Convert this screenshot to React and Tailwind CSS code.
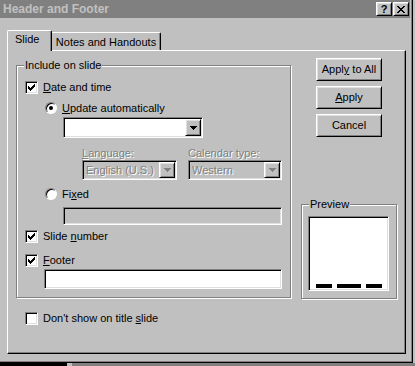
import React from 'react';

const sunken =
  'border border-t-[#808080] border-l-[#808080] border-r-white border-b-white shadow-[inset_1px_1px_0_#000,inset_-1px_-1px_0_#dfdfdf]';
const raised =
  'border border-t-white border-l-white border-r-black border-b-black shadow-[inset_1px_1px_0_#dfdfdf,inset_-1px_-1px_0_#808080]';
const disabledText = 'text-[#808080] [text-shadow:1px_1px_0_#fff]';

const CHECK = ['......X', '.....XX', 'X...XXX', 'XX.XXX.', 'XXXXX..', '.XXX...', '..X....'];
const CLOSE = ['XX....XX', '.XX..XX.', '..XXXX..', '...XX...', '..XXXX..', '.XX..XX.', 'XX....XX'];
const ARROW = ['XXXXXXX', '.XXXXX.', '..XXX..', '...X...'];

const Pixels = ({ rows, color = '#000' }) => (
  <svg width={rows[0].length} height={rows.length} shapeRendering="crispEdges">
    {rows.flatMap((row, y) =>
      [...row].map((c, x) =>
        c === 'X' ? <rect key={`${x}-${y}`} x={x} y={y} width="1" height="1" fill={color} /> : null
      )
    )}
  </svg>
);

const Checkbox = ({ checked }) => (
  <div className={`${sunken} flex h-[13px] w-[13px] shrink-0 items-center justify-center bg-white`}>
    {checked ? <Pixels rows={CHECK} /> : null}
  </div>
);

const Radio = ({ checked }) => (
  <div className="flex h-[12px] w-[12px] shrink-0 items-center justify-center rounded-full border border-t-[#808080] border-l-[#808080] border-r-white border-b-white bg-white shadow-[inset_1px_1px_0_#000]">
    {checked ? <div className="h-[4px] w-[4px] rounded-full bg-black" /> : null}
  </div>
);

const Combo = ({ className, value, disabled }) => (
  <div className={`${sunken} flex p-px ${disabled ? 'bg-[#c0c0c0]' : 'bg-white'} ${className}`}>
    <div className={`flex flex-1 items-center pl-[2px] ${disabled ? disabledText : ''}`}>{value}</div>
    <div className={`${raised} flex w-[16px] items-center justify-center bg-[#c0c0c0]`}>
      <Pixels rows={ARROW} color={disabled ? '#808080' : '#000'} />
    </div>
  </div>
);

const Button = ({ children }) => (
  <div className={`${raised} flex h-[23px] w-[66px] items-center justify-center`}>
    <span>{children}</span>
  </div>
);

const Group = ({ label, className, children }) => (
  <div className={`relative border border-[#808080] shadow-[inset_1px_1px_0_#fff,1px_1px_0_#fff] ${className}`}>
    <span className="absolute -top-[7px] left-[7px] bg-[#c0c0c0] px-px">{label}</span>
    {children}
  </div>
);

const Key = ({ children }) => <u className="underline underline-offset-1">{children}</u>;

export default function App() {
  return (
    <div className="h-[366px] w-[415px] overflow-hidden bg-[#c0c0c0] font-['Liberation_Sans',Arial,sans-serif] text-[11px] leading-[13px] text-black">
      <div className="h-[363px] w-[413px] bg-[#c0c0c0] shadow-[inset_-1px_-1px_0_#000,inset_-2px_-2px_0_#808080]">
        {/* title bar */}
        <div className="flex h-[18px] w-[410px] items-center justify-between bg-[#808080] pl-[3px] pr-[1px]">
          <span className="text-[12px] font-bold text-[#c0c0c0]">Header and Footer</span>
          <div className="flex gap-px">
            <div className={`${raised} flex h-[14px] w-[16px] items-center justify-center bg-[#c0c0c0] text-[11px] font-bold leading-none`}>
              ?
            </div>
            <div className={`${raised} flex h-[14px] w-[16px] items-center justify-center bg-[#c0c0c0]`}>
              <Pixels rows={CLOSE} />
            </div>
          </div>
        </div>

        {/* tabs */}
        <div className="flex h-[32px] items-end pl-[7px]">
          <div className="relative z-10 -mb-px h-[21px] w-[45px] rounded-t-[2px] border-t border-l border-r border-t-white border-l-white border-r-black bg-[#c0c0c0] pl-[7px] pt-[2px] shadow-[inset_-1px_0_0_#808080]">
            Slide
          </div>
          <div className="flex h-[18px] w-[109px] justify-center rounded-tr-[2px] border-t border-r border-t-white border-r-black pt-[3px] shadow-[inset_-1px_0_0_#808080]">
            Notes and Handouts
          </div>
        </div>

        {/* tab panel */}
        <div className="ml-[7px] flex h-[304px] w-[399px] border border-t-white border-l-white border-r-black border-b-black shadow-[inset_-1px_-1px_0_#808080]">
          <div className="flex flex-col pl-[8px] pt-[14px]">
            <Group label="Include on slide" className="h-[233px] w-[275px]">
              <div className="flex flex-col pl-[8px] pt-[15px]">
                <div className="flex h-[13px] items-center gap-[5px]">
                  <Checkbox checked />
                  <span>
                    <Key>D</Key>ate and time
                  </span>
                </div>
                <div className="ml-[20px] mt-[8px] flex h-[12px] items-center gap-[5px]">
                  <Radio checked />
                  <span>
                    <Key>U</Key>pdate automatically
                  </span>
                </div>
                <Combo className="ml-[38px] mt-[3px] h-[21px] w-[140px]" value="" />
                <div className={`ml-[57px] mt-[9px] flex ${disabledText}`}>
                  <span className="w-[106px]">
                    <Key>L</Key>anguage:
                  </span>
                  <span>Calendar type:</span>
                </div>
                <div className="ml-[57px] flex gap-[11px]">
                  <Combo className="h-[20px] w-[95px]" value="English (U.S.)" disabled />
                  <Combo className="h-[20px] w-[94px]" value="Western" disabled />
                </div>
                <div className="ml-[20px] mt-[8px] flex h-[12px] items-center gap-[5px]">
                  <Radio />
                  <span>
                    Fi<Key>x</Key>ed
                  </span>
                </div>
                <div className={`${sunken} ml-[38px] mt-[7px] h-[18px] w-[219px] bg-[#c0c0c0]`} />
                <div className="mt-[5px] flex h-[13px] items-center gap-[5px]">
                  <Checkbox checked />
                  <span>
                    Slide <Key>n</Key>umber
                  </span>
                </div>
                <div className="mt-[11px] flex h-[13px] items-center gap-[5px]">
                  <Checkbox checked />
                  <span>
                    <Key>F</Key>ooter
                  </span>
                </div>
                <div className={`${sunken} ml-[19px] mt-[2px] h-[20px] w-[238px] bg-white`} />
              </div>
            </Group>
            <div className="ml-[9px] mt-[14px] flex h-[13px] items-center gap-[5px]">
              <Checkbox />
              <span>
                Don't show on title <Key>s</Key>lide
              </span>
            </div>
          </div>

          <div className="ml-[10px] flex flex-col pt-[7px]">
            <div className="ml-[15px] flex flex-col gap-[5px]">
              <Button>
                Appl<Key>y</Key> to All
              </Button>
              <Button>
                <Key>A</Key>pply
              </Button>
              <Button>Cancel</Button>
            </div>
            <Group label="Preview" className="mt-[67px] h-[95px] w-[96px]">
              <div className="pl-[6px] pt-[11px]">
                <div className={`${sunken} flex h-[75px] w-[81px] items-end gap-[5px] bg-white pb-[2px] pl-[7px]`}>
                  <div className="h-[4px] w-[16px] bg-black" />
                  <div className="h-[4px] w-[24px] bg-black" />
                  <div className="h-[4px] w-[16px] bg-black" />
                </div>
              </div>
            </Group>
          </div>
        </div>
      </div>
      <div className="flex h-[3px] bg-black">
        <div className="w-[67px]" />
        <div className="w-[5px] bg-[#c0c0c0]" />
        <div className="flex-1 bg-[#808080]" />
      </div>
    </div>
  );
}
